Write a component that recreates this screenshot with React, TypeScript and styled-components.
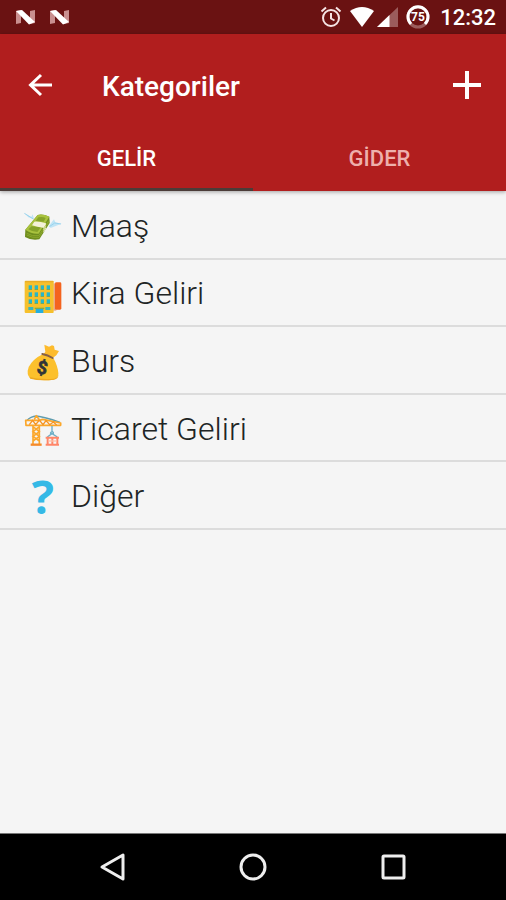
import React, { useState } from "react";
import styled, { createGlobalStyle } from "styled-components";

const GlobalStyle = createGlobalStyle`
  *, *::before, *::after { box-sizing: border-box; }
  body { margin: 0; background: #f5f5f5; font-family: Roboto, "Noto Sans", sans-serif; }
  button { margin: 0; padding: 0; border: 0; background: none; color: inherit; font: inherit; cursor: pointer; }
`;

const Screen = styled.div`
  display: flex;
  flex-direction: column;
  min-height: 100vh;
  background: #f5f5f5;
`;

const StatusBar = styled.div`
  display: flex;
  align-items: center;
  justify-content: space-between;
  height: 34px;
  padding: 0 10px 0 15px;
  background: #6a1212;
  color: #fff;
`;

const StatusGroup = styled.div<{ $gap: number }>`
  display: flex;
  align-items: center;
  gap: ${(p) => p.$gap}px;
`;

const Glyph = styled.svg`
  display: block;
  flex: none;
  overflow: visible;
`;

const Clock = styled.time`
  margin-left: 4px;
  padding-top: 2px;
  font-size: 22px;
  line-height: 32px;
  font-weight: 500;
`;

const AppBar = styled.header`
  background: #b11e1e;
  color: #fff;
  box-shadow: 0 1px 4px rgba(0, 0, 0, 0.35);
`;

const Toolbar = styled.div`
  display: flex;
  align-items: center;
  height: 102px;
  padding: 0 17px 0 18px;
`;

const IconButton = styled.button`
  display: grid;
  place-items: center;
  width: 44px;
  height: 44px;
`;

const Title = styled.h1`
  flex: 1;
  margin: 0 0 0 40px;
  padding-top: 4px;
  font-size: 28px;
  line-height: 34px;
  font-weight: 500;
`;

const Tabs = styled.div`
  display: grid;
  grid-template-columns: 1fr 1fr;
`;

const Tab = styled.button<{ $active: boolean }>`
  height: 55px;
  padding-bottom: 6px;
  border-bottom: 3px solid ${(p) => (p.$active ? "#4b3c38" : "#b11e1e")};
  color: ${(p) => (p.$active ? "#fff" : "#eeb0ac")};
  font-size: 22px;
  line-height: 28px;
  font-weight: 500;
`;

const List = styled.ul`
  display: grid;
  grid-auto-rows: 1fr;
  min-height: 339px;
  margin: 0;
  padding: 1px 0 0;
  list-style: none;
`;

const Row = styled.li`
  display: flex;
  align-items: center;
  gap: 7px;
  padding: 0 24px;
  border-bottom: 2px solid #dcdcdc;
  color: #202424;
  font-size: 32px;
  line-height: 40px;
  font-weight: 300;
`;

const RowLabel = styled.span`
  padding-top: 2px;
`;

const NavBar = styled.nav`
  display: flex;
  align-items: center;
  justify-content: center;
  gap: 80px;
  height: 67px;
  margin-top: auto;
  border-top: 1px solid #777;
  background: #000;
  color: #eee;
`;

const NavButton = styled.button`
  display: grid;
  place-items: center;
  width: 60px;
  height: 48px;
`;

const NougatIcon = () => (
  <Glyph width="22" height="16" viewBox="0 0 22 16">
    <path d="M1 2 L6 1 V14 L1 15Z M15 2 L20 1 V14 L15 15Z" fill="#c98f8f" />
    <path d="M1 2 L7 1 L20 13 L14 15.5Z" fill="#fff" />
  </Glyph>
);

const AlarmIcon = () => (
  <Glyph width="22" height="22" viewBox="0 0 22 22" fill="none" stroke="#f6e4e4" strokeWidth="2">
    <circle cx="11" cy="12" r="8" />
    <path d="M1.5 5.5 L6 1.5 M20.500 5.5 L16 1.500 M11 7 V12.500 L14.500 14.500" />
  </Glyph>
);

const WifiIcon = () => (
  <Glyph width="24" height="20" viewBox="0 0 24 20">
    <path d="M0 4 Q12 -4 24 4 L12 20Z" fill="#fff" />
  </Glyph>
);

const SignalIcon = () => (
  <Glyph width="21" height="20" viewBox="0 0 21 20">
    <path d="M0 20 L21 0 V20Z" fill="#9b5c5c" />
    <path d="M0 20 L12.500 8 V20Z" fill="#fff" />
  </Glyph>
);

const BatteryIcon = () => (
  <Glyph width="24" height="24" viewBox="0 0 24 24">
    <circle cx="12" cy="12" r="10" fill="none" stroke="#9b5c5c" strokeWidth="3" />
    <path d="M5 19 A10 10 0 1 1 19 19" fill="none" stroke="#fff" strokeWidth="3" />
    <text x="12" y="16" textAnchor="middle" fontSize="12" fontWeight="700" fill="#fff">75</text>
  </Glyph>
);

const MoneyIcon = () => (
  <Glyph width="40" height="40" viewBox="42 15 120 120" aria-hidden="true">
    <path d="M42 38 L55 52 L72 58 L68 43 L64 51Z M117 77 L132 58 L136 67 L155 71 L137 78 L122 84Z" fill="#bfe4f5" />
    <path d="M43 40 L70 57 M118 80 L134 69 L153 72" fill="none" stroke="#83c9e8" strokeWidth="2" />
    <path d="M83 45 Q98 41 118 50 L119 69 L88 118 Q66 123 45 111 L46 89Z" fill="#6f8d1e" />
    <path d="M83 45 Q98 41 118 50 L86 101 Q65 103 46 89Z" fill="#a9c23e" />
    <path d="M85 52 Q98 49 107 54 L101 65 L77 63Z M65 79 L93 82 L82 96 Q67 96 55 88Z" fill="#86a329" />
    <path d="M73 65 Q90 64 108 70 L99 83 Q83 81 66 76Z M99 83 L108 70 V86 L100 98Z" fill="#f4f1d7" />
    <path d="M50 100 Q67 110 86 107 L117 61 M50 105 Q67 115 87 112 L117 66" fill="none" stroke="#9ab534" strokeWidth="2" />
  </Glyph>
);

const windowColumns = [56, 74, 92, 110];
const windowRows = [62, 83, 104];

const BuildingIcon = () => (
  <Glyph width="40" height="40" viewBox="42 22 120 120" aria-hidden="true">
    <rect x="130" y="56" width="9" height="82" fill="#e9a48c" />
    <rect x="135" y="53" width="19" height="82" rx="4" fill="#f4631e" />
    <rect x="44" y="48" width="87" height="97" rx="3" fill="#f6c02c" />
    <path d="M45 49 H130 V53 H45Z" fill="#e9ad27" />
    {windowRows.map((y) =>
      windowColumns.map((x) => (
        <g key={`${x}-${y}`}>
          <rect x={x} y={y} width="10" height="12" fill="#26b6c9" />
          <rect x={x} y={y + 11} width="10" height="3" fill="#77a85a" />
        </g>
      ))
    )}
    <path d="M55 127 H70 V136 H55Z M106 127 H121 V136 H106Z" fill="#39b6bd" />
    <path d="M77 132 H100 V145 H77Z" fill="#24aee0" />
    <path d="M74 129 H103 V133 H74Z" fill="#82a94a" />
  </Glyph>
);

const BagIcon = () => (
  <Glyph width="40" height="40" viewBox="42 21 120 120" aria-hidden="true">
    <path d="M103 35 L117 41 L126 37 L132 39 L134 50 L147 54 L139 67 L128 75 L97 67 L106 57Z" fill="#fdbb2c" />
    <path d="M98 64 Q70 77 56 102 Q48 125 61 136 Q90 145 131 140 Q149 134 144 112 Q137 82 127 73Z" fill="#fcc02c" />
    <path d="M58 132 Q90 141 133 137 Q143 134 145 125 Q146 137 132 140 Q90 145 61 137Z" fill="#eea820" />
    <path d="M97 63 Q113 66 128 75" fill="none" stroke="#876044" strokeWidth="6" strokeLinecap="round" />
    <text x="97" y="123" textAnchor="middle" fontFamily="Roboto, sans-serif" fontSize="54" fontWeight="700" fill="#303538" stroke="#303538" strokeWidth="2" transform="rotate(12 97 105)">$</text>
  </Glyph>
);

const CraneIcon = () => (
  <Glyph width="40" height="40" viewBox="42 23 120 120" fill="none" aria-hidden="true">
    <path d="M50 61 Q62 48 79 47 Q102 49 150 66" stroke="#5f9cae" strokeWidth="4" />
    <path d="M47 60 H88 L98 57 L152 68 V75 H48Z M73 57 L79 46 L87 57" stroke="#fba72b" strokeWidth="5" strokeLinejoin="round" />
    <path d="M58 73 L68 60 L77 73 L88 59 L99 73 L108 61 L119 73 L130 65 L140 74" stroke="#f79421" strokeWidth="4" />
    <path d="M69 76 V132 M88 76 V132 M69 79 L88 94 L69 108 L88 122 M88 79 L69 94 L88 108 L69 122" stroke="#fba72b" strokeWidth="5" />
    <path d="M62 133 H95" stroke="#f58a2a" strokeWidth="7" />
    <path d="M126 77 V94 Q119 97 123 102 M126 92 Q132 96 130 102 M112 110 L126 100 L142 110" stroke="#6caec6" strokeWidth="4" />
    <path d="M107 112 H147 M107 133 H147 M113 109 V136 M142 109 V136 M127 112 V133" stroke="#ff8669" strokeWidth="6" />
    <path d="M115 122 H140" stroke="#ffc0a8" strokeWidth="4" />
  </Glyph>
);

const QuestionIcon = () => (
  <Glyph width="40" height="40" viewBox="42 21 120 120" aria-hidden="true">
    <text x="99" y="138" textAnchor="middle" fontFamily="'Open Sans', 'Noto Sans', sans-serif" fontSize="140" fontWeight="700" fill="#35b9e6">?</text>
  </Glyph>
);

const categories = {
  GELİR: [
    { name: "Maaş", Icon: MoneyIcon },
    { name: "Kira Geliri", Icon: BuildingIcon },
    { name: "Burs", Icon: BagIcon },
    { name: "Ticaret Geliri", Icon: CraneIcon },
    { name: "Diğer", Icon: QuestionIcon },
  ],
  GİDER: [{ name: "Diğer", Icon: QuestionIcon }],
};

type TabName = keyof typeof categories;
const tabNames = Object.keys(categories) as TabName[];

export default function App() {
  const [active, setActive] = useState<TabName>("GELİR");

  return (
    <Screen lang="tr">
      <GlobalStyle />
      <StatusBar>
        <StatusGroup $gap={12}>
          <NougatIcon />
          <NougatIcon />
        </StatusGroup>
        <StatusGroup $gap={8}>
          <AlarmIcon />
          <StatusGroup $gap={3}>
            <WifiIcon />
            <SignalIcon />
          </StatusGroup>
          <StatusGroup $gap={6}>
            <BatteryIcon />
            <Clock>12:32</Clock>
          </StatusGroup>
        </StatusGroup>
      </StatusBar>
      <AppBar>
        <Toolbar>
          <IconButton aria-label="Geri">
            <Glyph width="24" height="24" viewBox="0 0 24 24" fill="none" stroke="currentColor" strokeWidth="3">
              <path d="M24 12 H2.500 M13 2 L2.500 12 L13 22" />
            </Glyph>
          </IconButton>
          <Title>Kategoriler</Title>
          <IconButton aria-label="Ekle">
            <Glyph width="28" height="28" viewBox="0 0 28 28" fill="none" stroke="currentColor" strokeWidth="4">
              <path d="M14 0 V28 M0 14 H28" />
            </Glyph>
          </IconButton>
        </Toolbar>
        <Tabs role="tablist">
          {tabNames.map((name) => (
            <Tab key={name} role="tab" aria-selected={name === active} $active={name === active} onClick={() => setActive(name)}>
              {name}
            </Tab>
          ))}
        </Tabs>
      </AppBar>
      <List>
        {categories[active].map(({ name, Icon }) => (
          <Row key={name}>
            <Icon />
            <RowLabel>{name}</RowLabel>
          </Row>
        ))}
      </List>
      <NavBar>
        <NavButton aria-label="Geri dön">
          <Glyph width="28" height="28" viewBox="0 0 28 28" fill="none" stroke="currentColor" strokeWidth="3" strokeLinejoin="round">
            <path d="M24 2 V26 L3 14Z" />
          </Glyph>
        </NavButton>
        <NavButton aria-label="Ana ekran">
          <Glyph width="28" height="28" viewBox="0 0 28 28" fill="none" stroke="currentColor" strokeWidth="3">
            <circle cx="14" cy="14" r="12" />
          </Glyph>
        </NavButton>
        <NavButton aria-label="Son uygulamalar">
          <Glyph width="28" height="28" viewBox="0 0 28 28" fill="none" stroke="currentColor" strokeWidth="3">
            <rect x="4" y="3" width="21" height="22" rx="1" />
          </Glyph>
        </NavButton>
      </NavBar>
    </Screen>
  );
}
